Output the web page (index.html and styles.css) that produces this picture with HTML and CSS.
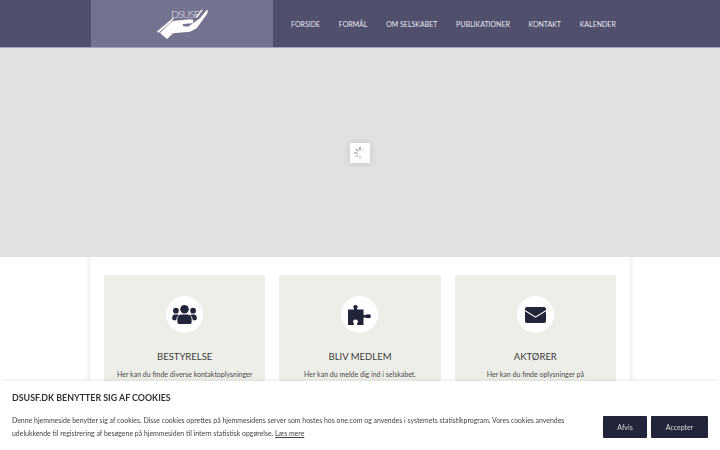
FILE: index.html
```html
<!DOCTYPE html>
<html lang="da">
<head>
    <meta charset="UTF-8">
    <meta name="viewport" content="width=device-width, initial-scale=1.0">
    <title>DSUSF</title>
    <link rel="stylesheet" href="styles.css">
</head>
<body>
    <header class="site-header">
        <div class="header-inner">
            <a class="logo" href="#">
                <span class="logo-text">DSUSF</span>
                <svg class="logo-hand" width="54" height="32" viewBox="0 0 54 32" fill="#fff">
                    <path d="M0 22.500 L16 9 L17 10 L1.500 24 Z"/>
                    <path d="M3 24 L13 14 Q15.500 11.700 18 11.700 L33 10.300 Q37 10.500 36.300 11.700 L35.700 14.300 L26 15 L25.700 17 L31 17.700 L43 9.300 L49.700 1 L51 1.700 L50 5 L39.700 19.300 L33 22.700 L16 24.300 L10 30 Z"/>
                    <path d="M39 7.700 L44.700 0.300 L45.700 1 L40.200 8.700 Z"/>
                </svg>
            </a>
            <nav class="main-nav">
                <a href="#">FORSIDE</a>
                <a href="#">FORMÅL</a>
                <a href="#">OM SELSKABET</a>
                <a href="#">PUBLIKATIONER</a>
                <a href="#">KONTAKT</a>
                <a href="#">KALENDER</a>
            </nav>
        </div>
    </header>

    <!-- Slider, still loading -->
    <div class="hero">
        <div class="loader">
            <svg width="12" height="12" viewBox="0 0 12 12">
                <g stroke-width="1.300" stroke-linecap="round" fill="none">
                    <path d="M6 0.500V3" stroke="#888"/>
                    <path d="M2.200 2.200L3.900 3.900" stroke="#999"/>
                    <path d="M0.500 6H3" stroke="#aaa"/>
                    <path d="M2.200 9.800L3.900 8.100" stroke="#bbb"/>
                    <path d="M6 11.500V9" stroke="#ccc"/>
                    <path d="M9.800 2.200L8.100 3.900" stroke="#e4e4e4"/>
                </g>
            </svg>
        </div>
    </div>

    <main class="content">
        <section class="card">
            <div class="card-icon">
                <svg width="25" height="19" viewBox="0 0 26 20" fill="#22243a">
                    <circle cx="13" cy="4.500" r="4.500"/>
                    <circle cx="4" cy="6" r="3"/>
                    <circle cx="22" cy="6" r="3"/>
                    <path d="M7 20 Q5.500 20 5.500 18 V15 Q5.500 10 10 10 H16 Q20.500 10 20.500 15 V18 Q20.500 20 19 20 Z"/>
                    <path d="M0 14 Q0 10 3 10 H6 L7 10.500 Q4.500 12 4.200 16 H1.500 Q0 16 0 14 Z"/>
                    <path d="M26 14 Q26 10 23 10 H20 L19 10.500 Q21.500 12 21.800 16 H24.500 Q26 16 26 14 Z"/>
                </svg>
            </div>
            <h2>BESTYRELSE</h2>
            <p>Her kan du finde diverse kontaktoplysninger</p>
        </section>
        <section class="card">
            <div class="card-icon">
                <svg width="23" height="20" viewBox="0 0 23 20" fill="#22243a">
                    <path d="M0 4.500 H5 Q6.500 4.500 6 3.200 Q5.200 2.500 5.200 1.800 Q5.500 0 7.500 0 Q9.800 0 9.800 1.800 Q9.800 2.500 9 3.200 Q8.500 4.500 10 4.500 H15.500 V9 Q15.500 10.500 17 10 Q18.500 9.200 20.500 9.200 Q23 9.200 23 11.300 Q23 13.300 20.500 13.300 Q18.500 13.300 17 12.600 Q15.500 12 15.500 13.500 V20 H10 Q8.500 20 9 18.500 Q10 17.800 10 16.700 Q10 14.500 7.500 14.500 Q5 14.500 5 16.700 Q5 17.800 6 18.500 Q6.500 20 5 20 H0 Z"/>
                </svg>
            </div>
            <h2>BLIV MEDLEM</h2>
            <p>Her kan du melde dig ind i selskabet.</p>
        </section>
        <section class="card">
            <div class="card-icon">
                <svg width="21" height="16" viewBox="0 0 21 16" fill="#22243a">
                    <path d="M2 0 H19 Q21 0 21 2 V3 L10.500 9.500 L0 3 V2 Q0 0 2 0 Z"/>
                    <path d="M0 4.200 L10.500 10.700 L21 4.200 V14 Q21 16 19 16 H2 Q0 16 0 14 Z"/>
                </svg>
            </div>
            <h2>AKTØRER</h2>
            <p>Her kan du finde oplysninger på</p>
        </section>
    </main>

    <!-- Cookie notice, fixed to the bottom of the window -->
    <div class="cookie-bar">
        <h3>DSUSF.DK BENYTTER SIG AF COOKIES</h3>
        <div class="cookie-row">
            <p>Denne hjemmeside benytter sig af cookies. Disse cookies oprettes på hjemmesidens server som hostes hos one.com og anvendes i systemets statistikprogram. Vores cookies anvendes udelukkende til registrering af besøgene på hjemmesiden til intern statistisk opgørelse. <a href="#">Læs mere</a></p>
            <div class="cookie-buttons">
                <button class="btn-decline">Afvis</button>
                <button class="btn-accept">Accepter</button>
            </div>
        </div>
    </div>
</body>
</html>
```

FILE: styles.css
```css
/* Base styles */
html, body {
    height: 100%;
}
body {
    font-family: Lato, Arial, sans-serif;
    margin: 0;
    padding: 0;
    background-color: #fff;
    color: #444;
    overflow: hidden;
}

/* Header */
.site-header {
    background-color: #50506d;
    border-bottom: 1px solid #a3a3bd;
    height: 47px;
}
.header-inner {
    display: flex;
    width: 540px;
    height: 47px;
    margin: 0 auto;
    padding-left: 1px;
    box-sizing: border-box;
}
.logo {
    position: relative;
    display: block;
    flex: 0 0 182px;
    background-color: #737390;
    text-decoration: none;
}
.logo-text {
    position: absolute;
    left: 80px;
    top: 8px;
    color: #e8e8ee;
    font-size: 10.500px;
    font-weight: 300;
    letter-spacing: -1px;
}
.logo-hand {
    position: absolute;
    left: 66px;
    top: 9px;
}
.main-nav {
    display: flex;
    align-items: center;
    gap: 18.700px;
    padding-left: 18px;
    white-space: nowrap;
}
.main-nav a {
    color: #e6e6ee;
    font-size: 7px;
    text-decoration: none;
}

/* Hero */
.hero {
    position: relative;
    display: flex;
    align-items: center;
    justify-content: center;
    height: 209px;
    background-color: #e1e1e1;
}
.loader {
    display: flex;
    align-items: center;
    justify-content: center;
    width: 20px;
    height: 20px;
    background: #fff;
    box-shadow: 0 0 6px rgba(0, 0, 0, 0.150);
}

/* Cards */
.content {
    display: flex;
    gap: 14px;
    width: 512px;
    height: 175px;
    margin: 0 auto;
    padding: 18px 14px 0;
    background: #fff;
    box-shadow: 0 0 5px rgba(0, 0, 0, 0.150);
}
.card {
    flex: 1;
    padding-top: 21px;
    background-color: #eeeee8;
    text-align: center;
}
.card-icon {
    display: flex;
    align-items: center;
    justify-content: center;
    width: 37px;
    height: 37px;
    margin: 0 auto 17px;
    border-radius: 50%;
    background: #fff;
}
.card h2 {
    margin: 0;
    font-size: 9.500px;
    font-weight: 400;
    line-height: 14px;
    color: #3c3c3c;
}
.card p {
    margin: 3px 0 0;
    font-size: 7px;
    line-height: 14px;
    color: #4a4a4a;
}

/* Cookie bar */
.cookie-bar {
    position: fixed;
    left: 0;
    right: 0;
    bottom: 0;
    height: 69px;
    padding: 0 12px;
    background: #fff;
    box-shadow: 0 0 4px rgba(0, 0, 0, 0.120);
}
.cookie-bar h3 {
    margin: 10px 0 0;
    font-size: 8.850px;
    line-height: 14px;
    color: #333;
}
.cookie-row {
    display: flex;
    align-items: center;
    gap: 24px;
    margin-top: 9px;
}
.cookie-row p {
    flex: 1;
    margin: 0;
    font-size: 6.930px;
    line-height: 12.500px;
    color: #444;
}
.cookie-row a {
    color: #444;
}
.cookie-buttons {
    display: flex;
    gap: 4px;
}
.cookie-buttons button {
    height: 22px;
    padding: 0;
    border: none;
    border-radius: 1px;
    background-color: #22243a;
    color: #ddd;
    font-family: Lato, Arial, sans-serif;
    font-size: 7px;
}
.btn-decline {
    width: 44px;
}
.btn-accept {
    width: 57px;
}
```
